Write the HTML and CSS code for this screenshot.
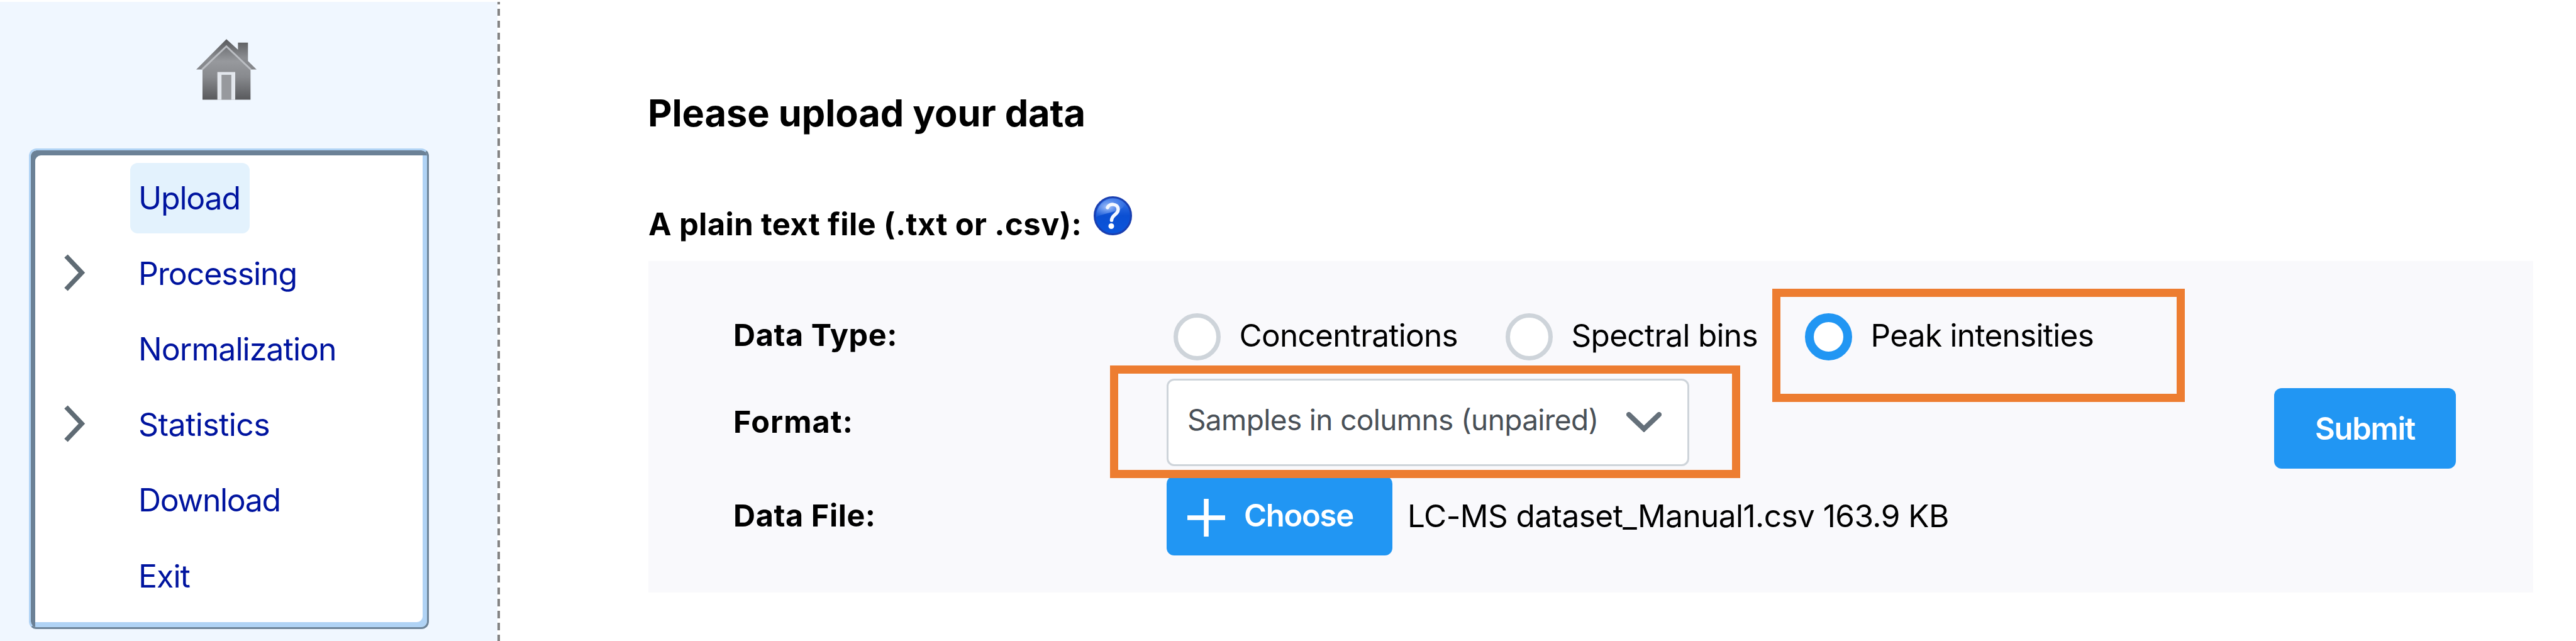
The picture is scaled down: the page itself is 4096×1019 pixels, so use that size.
FILE: index.html
```html
<!DOCTYPE html>
<html lang="en">
<head>
<meta charset="utf-8">
<title>Data upload</title>
<link rel="stylesheet" href="styles.css">
</head>
<body>
<div class="page">
  <aside class="sidebar">
    <a class="home" href="#" aria-label="Home">
      <svg class="home-icon" viewBox="105 82 308 310">
        <defs>
          <linearGradient id="roof" x1="0" y1="82" x2="0" y2="240" gradientUnits="userSpaceOnUse">
            <stop offset="0" stop-color="#58595c"/><stop offset=".6" stop-color="#8a8c90"/><stop offset="1" stop-color="#85878b"/>
          </linearGradient>
          <linearGradient id="wall" x1="0" y1="130" x2="0" y2="392" gradientUnits="userSpaceOnUse">
            <stop offset="0" stop-color="#77797d"/><stop offset=".25" stop-color="#97999d"/><stop offset=".55" stop-color="#888a8e"/><stop offset="1" stop-color="#58595c"/>
          </linearGradient>
        </defs>
        <path fill="url(#roof)" d="M259 82L318 136V100H369V194L413 237H381L259 130L137 237H105Z"/>
        <path fill="url(#wall)" d="M259 122L382 240V391H137V240Z"/>
        <path fill="none" stroke="#bbbec3" stroke-width="9" d="M134 237L259 119L384 237"/>
        <path fill="#e3e7ed" d="M213 250H304V392H213Z"/>
        <path fill="#97999d" d="M234 264H284V391H234Z"/>
      </svg>
    </a>
    <nav class="menu">
      <a class="item" href="#"><span class="text active">Upload</span></a>
      <a class="item" href="#"><svg class="arrow" viewBox="0 0 34 59"><path d="M4 3L29 29.5L4 56"/></svg><span class="text processing">Processing</span></a>
      <a class="item" href="#"><span class="text">Normalization</span></a>
      <a class="item" href="#"><svg class="arrow" viewBox="0 0 34 59"><path d="M4 3L29 29.5L4 56"/></svg><span class="text statistics">Statistics</span></a>
      <a class="item" href="#"><span class="text download">Download</span></a>
      <a class="item" href="#"><span class="text">Exit</span></a>
    </nav>
  </aside>
  <div class="divider"></div>
  <main class="content">
    <h1 class="title">Please upload your data</h1>
    <div class="subtitle">
      <span>A plain text file (.txt or .csv):</span>
      <svg class="help" viewBox="0 0 61 62">
        <defs>
          <linearGradient id="ball" x1="0" y1="0" x2="0" y2="1">
            <stop offset="0" stop-color="#3f7bea"/><stop offset=".5" stop-color="#0b4fd2"/><stop offset="1" stop-color="#0a55dc"/>
          </linearGradient>
          <radialGradient id="shine" cx=".4" cy=".45" r=".6">
            <stop offset="0" stop-color="#a9c6fb"/><stop offset="1" stop-color="#4c83ea" stop-opacity=".25"/>
          </radialGradient>
        </defs>
        <ellipse cx="30.5" cy="31" rx="29" ry="29.5" fill="url(#ball)" stroke="#1a3fb0" stroke-width="3"/>
        <path d="M4 33A27 28 0 0 1 50 12C45 26 24 24 4 33Z" fill="url(#shine)"/>
        <path d="M22 18C24 11 39 11 39 21C39 29 29 29 28.5 38" fill="none" stroke="#f4f8ff" stroke-width="5.5" stroke-linecap="round"/>
        <circle cx="28" cy="47.500" r="4.500" fill="#fff"/>
      </svg>
    </div>
    <section class="panel">
      <div class="form">
        <div class="label">Data Type:</div>
        <div class="options">
          <label class="option first"><span class="radio"></span>Concentrations</label>
          <label class="option second"><span class="radio"></span>Spectral bins</label>
          <label class="option"><span class="radio checked"></span>Peak intensities</label>
        </div>
        <div class="label format">Format:</div>
        <div class="select">
          <span>Samples in columns (unpaired)</span>
          <svg class="caret" viewBox="0 0 56 32"><path d="M4 4L28 27L52 4"/></svg>
        </div>
        <div class="label">Data File:</div>
        <div class="file">
          <button class="button choose">
            <svg class="plus" viewBox="0 0 60 60"><path d="M30 0V60M0 30H60"/></svg>Choose
          </button>
          <span class="filename">LC-MS dataset_Manual1.csv 163.9 KB</span>
        </div>
      </div>
      <button class="button submit">Submit</button>
    </section>
  </main>
  <div class="mark mark-format"></div>
  <div class="mark mark-type"></div>
</div>
</body>
</html>
```

FILE: styles.css
```css
* { box-sizing: border-box; }
body { margin: 0; background: #fff; color: #000; font-family: Inter, "Liberation Sans", sans-serif; }
.page { position: relative; display: flex; width: 4096px; height: 1019px; padding-top: 3px; overflow: hidden; }

.sidebar { width: 791px; padding: 59px 0 0 46px; background: #f0f7ff; }
.home { display: block; width: 96px; height: 97px; margin-left: 266px; }
.home-icon { display: block; width: 96px; height: 97px; }
.menu {
  width: 636px; height: 764px; margin-top: 77px; padding-top: 16px;
  background: #fff; border: 3px solid; border-color: #b0d3f5 #6d8499 #6d8499 #b0d3f5; border-radius: 12px;
  box-shadow: inset 7px 8px 0 #6b8196, inset -7px -8px 0 #b0d3f5;
}
.item {
  position: relative; display: flex; align-items: center; height: 120.1px; padding-left: 158px;
  color: #00149f; font-size: 50px; letter-spacing: -.95px; text-decoration: none;
}
.text { padding: 0 13px; line-height: 112px; white-space: nowrap; }
.active { width: 190px; background: #e3f2fd; border-radius: 12px; letter-spacing: -1.2px; }
.processing { letter-spacing: -1.05px; }
.statistics { letter-spacing: -.6px; }
.download { letter-spacing: -1.4px; }
.arrow { position: absolute; left: 52px; top: 29px; width: 34px; height: 59px; }
.arrow path { fill: none; stroke: #5f6b74; stroke-width: 7.500px; }
.divider {
  width: 4px; margin-right: 236px;
  background: repeating-linear-gradient(#848484 0 11.500px, #fff 11.500px 18.770px) 0 -7.800px / 4px 1100px;
}

.content { flex: 1; }
.title { margin: 136px 0 0 -1px; font-size: 59.500px; line-height: 80px; font-weight: 700; letter-spacing: -.05px; white-space: nowrap; }
.subtitle { display: flex; margin-top: 91px; height: 104px; font-size: 49px; line-height: 94px; font-weight: 700; letter-spacing: .35px; white-space: nowrap; }
.help { width: 61px; height: 62px; margin: 2px 0 0 19px; }
.panel { display: flex; width: 2997px; height: 527px; margin-top: 1px; background: #f9f9fc; }
.form {
  display: grid; grid-template-columns: 689px 1760px; grid-template-rows: 138px 138px 159px;
  padding: 49px 0 0 135px; width: 2585px; align-content: start; align-items: center;
}
.label { font-size: 48.500px; font-weight: 700; letter-spacing: .6px; line-height: 60px; white-space: nowrap; }
.format { letter-spacing: 1.1px; }
.options { display: flex; padding-left: 11px; }
.option { display: flex; align-items: center; gap: 29.500px; font-size: 49.500px; letter-spacing: -.7px; line-height: 60px; white-space: nowrap; height: 72px; }
.first { width: 528px; }
.second { width: 476px; }
.radio { flex: none; width: 75px; height: 75px; margin-top: 4px; background: #fff; border: 7px solid #ced4da; border-radius: 50%; }
.checked { border: 14.500px solid #2196f3; }
.select {
  display: flex; align-items: center; width: 831px; height: 139px; padding: 0 41px 8px 30px;
  justify-content: space-between; background: #fff; border: 3.500px solid #ced4da; border-radius: 12px;
  color: #495057; font-size: 46px; letter-spacing: -.64px; white-space: nowrap;
}
.caret { width: 56px; height: 32px; margin-top: 8px; }
.caret path { fill: none; stroke: #65707a; stroke-width: 8px; stroke-linecap: round; }
.file { display: flex; align-items: center; }
.button { border: 0; border-radius: 12px; background: #2196f3; color: #fff; font-family: inherit; font-size: 49px; font-weight: 600; letter-spacing: -1.3px; }
.choose { display: flex; align-items: center; gap: 30px; width: 359px; height: 126px; padding: 0 0 0 33px; }
.plus { width: 60px; height: 60px; margin-top: 6px; }
.plus path { stroke: #fff; stroke-width: 7.600px; }
.filename { margin-left: 24px; font-size: 49.500px; letter-spacing: -.55px; white-space: nowrap; }
.submit { width: 289px; height: 128px; margin-top: 202px; padding: 0; }

.mark { position: absolute; border: 13px solid #ed7d31; }
.mark-format { left: 1765px; top: 580.500px; width: 1002px; height: 179px; }
.mark-type { left: 2818px; top: 458.500px; width: 656px; height: 180px; }
```
